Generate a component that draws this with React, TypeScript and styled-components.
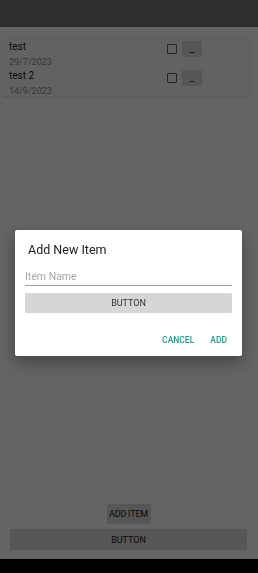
import styled, { createGlobalStyle } from 'styled-components';

const items = [
    { name: 'test', date: '29/7/2023' },
    { name: 'test 2', date: '14/9/2023' },
];

const App = () => {
    return (
        <>
            <GlobalStyle />
            <Screen>
                <StatusBar />
                <Content>
                    <ItemList>
                        {items.map((item) => (
                            <ItemRow key={item.name}>
                                <ItemText>
                                    <ItemName>{item.name}</ItemName>
                                    <ItemDate>{item.date}</ItemDate>
                                </ItemText>
                                <CheckBox />
                                <SmallButton>_</SmallButton>
                            </ItemRow>
                        ))}
                    </ItemList>
                    <Footer>
                        <AddItemButton>ADD ITEM</AddItemButton>
                        <WideButton>BUTTON</WideButton>
                    </Footer>
                </Content>
                <NavBar />
            </Screen>

            <Scrim>
                <Dialog>
                    <DialogTitle>Add New Item</DialogTitle>
                    <NameInput placeholder="Item Name" />
                    <DialogButton>BUTTON</DialogButton>
                    <DialogActions>
                        <TextButton>CANCEL</TextButton>
                        <TextButton>ADD</TextButton>
                    </DialogActions>
                </Dialog>
            </Scrim>
        </>
    );
};

const GlobalStyle = createGlobalStyle`
    * {
        box-sizing: border-box;
    }
    body {
        margin: 0;
        font-family: Roboto, 'Noto Sans', sans-serif;
        background: #000;
    }
`;

const Screen = styled.div`
    width: 258px;
    height: 573px;
    display: flex;
    flex-direction: column;
    background-color: #fafafa;
`;

const StatusBar = styled.div`
    height: 27px;
    background-color: #757575;
`;

const Content = styled.main`
    flex: 1;
    display: flex;
    flex-direction: column;
    justify-content: space-between;
    padding: 10px 8px 9px 3px;
`;

const ItemList = styled.section`
    background-color: #f5f5f5;
    box-shadow: 0 1px 2px rgba(0, 0, 0, 0.12);
    padding-bottom: 1px;
`;

const ItemRow = styled.div`
    height: 29px;
    display: flex;
    align-items: flex-start;
    padding: 4px 48px 0 6px;
`;

const ItemText = styled.div`
    flex: 1;
    display: flex;
    flex-direction: column;
    gap: 5px;
`;

const ItemName = styled.span`
    font-size: 10px;
    line-height: 11px;
    color: #1c1c1c;
`;

const ItemDate = styled.span`
    font-size: 9px;
    line-height: 10px;
    color: #8a8a8a;
`;

const CheckBox = styled.span`
    width: 10px;
    height: 10px;
    margin-top: 3px;
    margin-right: 5px;
    border: 1.5px solid #5a5a5a;
    border-radius: 1px;
`;

const SmallButton = styled.button`
    width: 20px;
    height: 16px;
    padding: 0;
    border: none;
    border-radius: 1px;
    background-color: #d6d6d6;
    color: #222;
    font-family: inherit;
    font-size: 9px;
    font-weight: 700;
    line-height: 12px;
`;

const Footer = styled.footer`
    display: flex;
    flex-direction: column;
    align-items: center;
    gap: 5px;
    padding-left: 7px;
    padding-right: 3px;
`;

const AddItemButton = styled.button`
    width: 44px;
    height: 20px;
    padding: 0;
    border: none;
    border-radius: 1px;
    background-color: #d6d6d6;
    color: #222;
    font-family: inherit;
    font-size: 9px;
    font-weight: 400;
    letter-spacing: -0.2px;
    white-space: nowrap;
`;

const WideButton = styled(AddItemButton)`
    width: 100%;
    height: 21px;
    letter-spacing: 0;
`;

const NavBar = styled.div`
    height: 14px;
    background-color: #000;
`;

const Scrim = styled.div`
    position: fixed;
    inset: 0;
    background-color: rgba(0, 0, 0, 0.6);
    padding: 230px 0 0 15px;
`;

const Dialog = styled.div`
    width: 227px;
    height: 126px;
    background-color: #fff;
    border-radius: 2px;
    box-shadow: 0 6px 16px rgba(0, 0, 0, 0.35);
    padding: 12px 10px 0 10px;
    display: flex;
    flex-direction: column;
`;

const DialogTitle = styled.h2`
    margin: 0 0 0 3px;
    font-size: 12.5px;
    line-height: 15px;
    font-weight: 400;
    color: #212121;
`;

const NameInput = styled.input`
    margin-top: 13px;
    width: 100%;
    height: 16px;
    padding: 0 0 2px;
    border: none;
    border-bottom: 1px solid #9e9e9e;
    font-family: inherit;
    font-size: 10.5px;
    color: #212121;
    background: transparent;
    outline: none;

    &::placeholder {
        color: #a6a6a6;
    }
`;

const DialogButton = styled.button`
    margin-top: 7px;
    width: 100%;
    height: 20px;
    padding: 0;
    border: none;
    border-radius: 1px;
    background-color: #d6d6d6;
    color: #333;
    font-family: inherit;
    font-size: 9px;
    font-weight: 400;
`;

const DialogActions = styled.div`
    margin-top: 22px;
    display: flex;
    justify-content: flex-end;
    gap: 16px;
    padding-right: 5px;
`;

const TextButton = styled.button`
    padding: 0;
    border: none;
    background: none;
    color: #1f9e8c;
    font-family: inherit;
    font-size: 8.5px;
    font-weight: 500;
`;

export default App;
